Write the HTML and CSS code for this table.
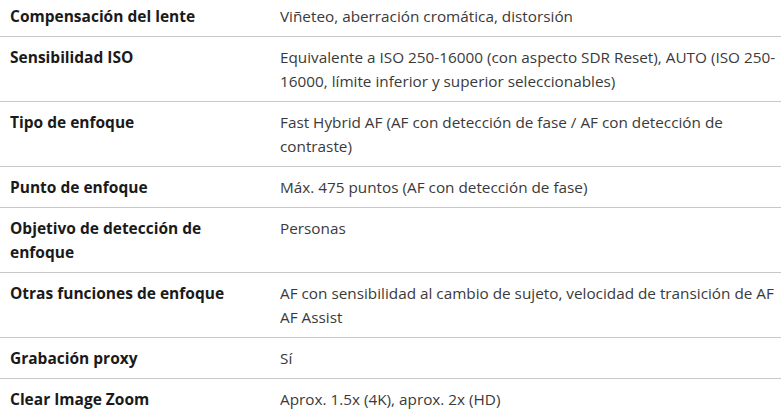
FILE: index.html
```html
<!DOCTYPE html>
<html lang="es">
<head>
<meta charset="utf-8">
<title>Especificaciones</title>
<link rel="stylesheet" href="styles.css">
</head>
<body>
<div class="specs">
  <div class="row"><div class="label">Compensación del lente</div><div class="value">Viñeteo, aberración cromática, distorsión</div></div>
  <div class="row"><div class="label">Sensibilidad ISO</div><div class="value">Equivalente a ISO 250-16000 (con aspecto SDR Reset), AUTO (ISO 250-16000, límite inferior y superior seleccionables)</div></div>
  <div class="row"><div class="label">Tipo de enfoque</div><div class="value">Fast Hybrid AF (AF con detección de fase / AF con detección de contraste)</div></div>
  <div class="row"><div class="label">Punto de enfoque</div><div class="value">Máx. 475 puntos (AF con detección de fase)</div></div>
  <div class="row"><div class="label">Objetivo de detección de enfoque</div><div class="value">Personas</div></div>
  <div class="row"><div class="label">Otras funciones de enfoque</div><div class="value">AF con sensibilidad al cambio de sujeto, velocidad de transición de AF AF Assist</div></div>
  <div class="row"><div class="label">Grabación proxy</div><div class="value">Sí</div></div>
  <div class="row"><div class="label">Clear Image Zoom</div><div class="value">Aprox. 1.5x (4K), aprox. 2x (HD)</div></div>
</div>
</body>
</html>
```
FILE: styles.css
```css
html, body {
  margin: 0;
  padding: 0;
  background: #fff;
  overflow: hidden;
}
body {
  font-family: "Open Sans", "Noto Sans", sans-serif;
  line-height: 24px;
  color: #333;
}
.specs {
  width: 800px;
  margin-top: -4px;
  display: flex;
  flex-direction: column;
}
.row {
  display: grid;
  grid-template-columns: 280px 1fr;
  padding: 8px 0;
  border-bottom: 1px solid #c8c8c8;
}
.label {
  padding: 0 30px 0 10px;
  font-size: 15.5px;
  font-weight: 700;
  color: #1a1a1a;
}
.value {
  padding-right: 5px;
  font-size: 15.3px;
  font-weight: 400;
  color: #3a3a3a;
}
```
